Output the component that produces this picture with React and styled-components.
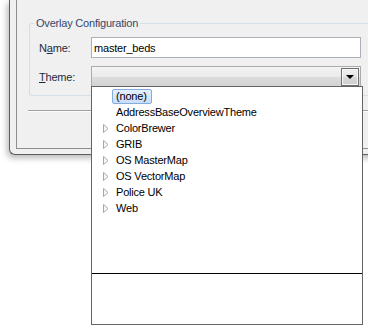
import styled, { createGlobalStyle } from 'styled-components';

const GlobalStyle = createGlobalStyle`
  html, body {
    margin: 0;
    background: #fff;
    overflow: hidden;
  }
  body {
    font-family: "Liberation Sans", Tahoma, Arial, sans-serif;
    font-size: 11px;
    letter-spacing: -0.2px;
    color: #000;
  }
`;

const Page = styled.div`
  width: 368px;
  height: 335px;
  padding-left: 9px;
  box-sizing: border-box;
  overflow: hidden;
`;

// outer window frame (only the lower-left part is visible)
const Window = styled.div`
  width: 400px;
  height: 155px;
  box-sizing: border-box;
  padding: 0 0 5px 6px;
  background: #f0f0f0;
  border-left: 1px solid #5e5e5e;
  border-bottom: 1px solid #5e5e5e;
  border-bottom-left-radius: 6px;
  box-shadow: -2px 3px 6px rgba(0, 0, 0, 0.28);
`;

const Panel = styled.div`
  height: 149px;
  box-sizing: border-box;
  display: flex;
  flex-direction: column;
  background: #f0f0f0;
  border-left: 1px solid #8e8e8e;
  border-bottom: 1px solid #8e8e8e;
`;

const Group = styled.fieldset`
  margin: 17px 0 0 12px;
  padding: 7px 0 8px 9px;
  border: 1px solid #d5dfe5;
  border-right: none;
  border-radius: 3px 0 0 3px;
  display: flex;
  flex-direction: column;
  gap: 8px;
  min-width: 0;
`;

const Legend = styled.legend`
  margin-left: -5px;
  padding: 0 2px;
  line-height: 13px;
  color: #34496b;
`;

const Row = styled.div`
  display: flex;
  align-items: center;
`;

const Label = styled.label`
  width: 52px;
  color: #1d2a40;
  u {
    text-decoration: underline;
  }
`;

const TextInput = styled.div`
  width: 270px;
  height: 21px;
  box-sizing: border-box;
  border: 1px solid #a9b0b8;
  background: #fff;
  padding-left: 2px;
  display: flex;
  align-items: center;
`;

const Combo = styled.div`
  position: relative;
  width: 270px;
  height: 21px;
  box-sizing: border-box;
  border: 1px solid #acacac;
  background: linear-gradient(#f3f3f3 0%, #ebebeb 50%, #dddddd 50%, #d3d3d3 100%);
  display: flex;
  justify-content: flex-end;
  align-items: center;
  padding-right: 1px;
`;

const DropButton = styled.div`
  width: 18px;
  height: 18px;
  box-sizing: border-box;
  border: 1px solid #6f6f6f;
  box-shadow: inset 0 0 0 1px #f6f6f6;
  background: linear-gradient(#f0f0f0 0%, #e6e6e6 50%, #d8d8d8 50%, #cfcfcf 100%);
  display: flex;
  align-items: center;
  justify-content: center;
`;

const Arrow = styled.div`
  width: 0;
  height: 0;
  border-left: 4px solid transparent;
  border-right: 4px solid transparent;
  border-top: 4px solid #000;
  margin-top: 1px;
`;

const Popup = styled.div`
  position: absolute;
  top: 100%;
  left: -1px;
  width: 270px;
  z-index: 10;
  background: #fff;
  border: 1px solid #646464;
  display: flex;
  flex-direction: column;
`;

const List = styled.div`
  height: 185px;
  padding-top: 1px;
  display: flex;
  flex-direction: column;
`;

const Item = styled.div`
  height: 16px;
  display: flex;
  align-items: center;
  padding-left: 9px;
`;

const Expander = styled.div`
  width: 11px;
  height: 16px;
  display: flex;
  align-items: center;
  svg {
    margin-left: 2px;
  }
`;

const ItemText = styled.span`
  height: 15px;
  line-height: 13px;
  box-sizing: border-box;
  padding: 0 4px 0 3px;
  border: 1px solid ${(p) => (p.$selected ? '#84acdd' : 'transparent')};
  border-radius: 2px;
  background: ${(p) =>
    p.$selected ? 'linear-gradient(#e6f0fd, #c7defb)' : 'transparent'};
  white-space: nowrap;
`;

const Divider = styled.div`
  height: 1px;
  background: #000;
`;

const Detail = styled.div`
  height: 50px;
`;

const Separator = styled.div`
  margin: 14px 0 0 11px;
  height: 1px;
  background: #a0a0a0;
  border-bottom: 1px solid #fcfcfc;
`;

const themes = [
  { name: '(none)', selected: true },
  { name: 'AddressBaseOverviewTheme' },
  { name: 'ColorBrewer', folder: true },
  { name: 'GRIB', folder: true },
  { name: 'OS MasterMap', folder: true },
  { name: 'OS VectorMap', folder: true },
  { name: 'Police UK', folder: true },
  { name: 'Web', folder: true },
];

const Triangle = () => (
  <svg width="6" height="9" viewBox="0 0 6 9">
    <path d="M0.5 0.5 L5 4.5 L0.5 8.5 Z" fill="#fff" stroke="#a6a6a6" strokeWidth="1" />
  </svg>
);

export default function App() {
  return (
    <Page>
      <GlobalStyle />
      <Window>
        <Panel>
          <Group>
            <Legend>Overlay Configuration</Legend>
            <Row>
              <Label>
                N<u>a</u>me:
              </Label>
              <TextInput>master_beds</TextInput>
            </Row>
            <Row>
              <Label>
                <u>T</u>heme:
              </Label>
              <Combo>
                <DropButton>
                  <Arrow />
                </DropButton>
                <Popup>
                  <List>
                    {themes.map((t) => (
                      <Item key={t.name}>
                        <Expander>{t.folder && <Triangle />}</Expander>
                        <ItemText $selected={t.selected}>{t.name}</ItemText>
                      </Item>
                    ))}
                  </List>
                  <Divider />
                  <Detail />
                </Popup>
              </Combo>
            </Row>
          </Group>
          <Separator />
        </Panel>
      </Window>
    </Page>
  );
}
